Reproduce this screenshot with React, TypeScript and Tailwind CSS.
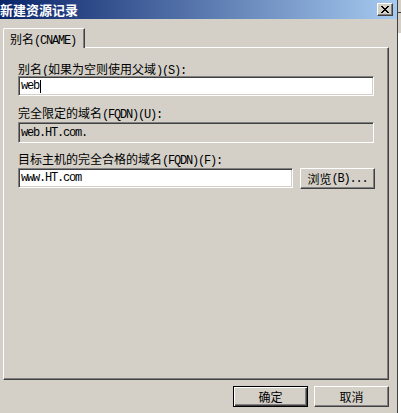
import React from "react";

function M({ t }: { t: string }) {
  const parts = t.split(/([\x20-\x7E]+)/).filter(Boolean);
  return (
    <>
      {parts.map((p, i) =>
        /^[\x20-\x7E]+$/.test(p) ? (
          <span key={i} className="font-['Liberation_Mono',monospace] tracking-[-1.2px]">
            {p}
          </span>
        ) : (
          <span key={i}>{p}</span>
        )
      )}
    </>
  );
}

const sunken =
  "border border-t-[#808080] border-l-[#808080] border-b-white border-r-white shadow-[inset_1px_1px_0_#404040,inset_-1px_-1px_0_#d4d0c8]";
const raised =
  "border border-t-white border-l-white border-b-[#404040] border-r-[#404040] shadow-[inset_-1px_-1px_0_#808080]";

export default function App() {
  return (
    <div className="w-[401px] h-[413px] flex overflow-hidden bg-[#d4d0c8] font-['Noto_Sans_CJK_SC',sans-serif] text-[12px] text-black">
      <div className="w-[398px] h-full flex flex-col border-r border-r-[#404040]">
        {/* title bar */}
        <div className="h-[19px] flex justify-between bg-[linear-gradient(to_right,#0a246a,#a6caf0)]">
          <div className="ml-0 text-white font-bold text-[13px] leading-[20px]">新建资源记录</div>
          <div className={`mt-[3px] mr-[4px] w-[16px] h-[13px] bg-[#d4d0c8] flex items-center justify-center ${raised}`}>
            <svg width="8" height="7" viewBox="0 0 8 7" shapeRendering="crispEdges">
              <path d="M0 0h2v1h-2zM6 0h2v1h-2zM1 1h2v1h-2zM5 1h2v1h-2zM2 2h4v1h-4zM3 3h2v1h-2zM2 4h4v1h-4zM1 5h2v1h-2zM5 5h2v1h-2zM0 6h2v1h-2zM6 6h2v1h-2z" fill="#000" />
            </svg>
          </div>
        </div>
        {/* body */}
        <div className="flex-1 flex flex-col px-[3px] pt-[9px]">
          <div className="flex">
            <div className="relative z-10 w-[82px] h-[20px] -mb-[1px] bg-[#d4d0c8] border-t border-l border-t-white border-l-white border-r border-r-[#404040] shadow-[inset_-1px_0_0_#808080] rounded-tl-[2px] pl-[6px] pt-[3px] leading-[14px]">
              <M t="别名(CNAME)" />
            </div>
          </div>
          <div className="w-[386px] h-[333px] border border-t-white border-l-white border-b-[#404040] border-r-[#404040] shadow-[inset_-1px_-1px_0_#808080] pl-[14px] pt-[14px] flex flex-col">
            <div className="h-[14px] leading-[14px]">
              <M t="别名(如果为空则使用父域)(S):" />
            </div>
            <div className={`w-[356px] h-[20px] bg-white ${sunken} pl-[2px] flex items-center leading-[14px]`}>
              <M t="web" />
              <span className="ml-[1px] w-[1px] h-[13px] bg-black" />
            </div>
            <div className="mt-[10px] h-[14px] leading-[14px]">
              <M t="完全限定的域名(FQDN)(U):" />
            </div>
            <div className={`mt-[2px] w-[356px] h-[21px] bg-[#d4d0c8] ${sunken} pl-[2px] flex items-center leading-[14px]`}>
              <M t="web.HT.com." />
            </div>
            <div className="mt-[9px] h-[14px] leading-[14px]">
              <M t="目标主机的完全合格的域名(FQDN)(F):" />
            </div>
            <div className="mt-[2px] flex gap-[7px]">
              <div className={`w-[275px] h-[20px] bg-white ${sunken} pl-[2px] flex items-center leading-[14px]`}>
                <M t="www.HT.com" />
              </div>
              <div className={`w-[75px] h-[21px] ${raised} flex items-center justify-center leading-[14px]`}>
                <M t="浏览(B)..." />
              </div>
            </div>
          </div>
          <div className="w-[386px] mt-[6px] flex justify-end gap-[6px]">
            <div className="w-[75px] h-[21px] border border-black shadow-[inset_1px_1px_0_#fff,inset_-1px_-1px_0_#404040,inset_-2px_-2px_0_#808080] flex items-center justify-center leading-[14px]">
              确定
            </div>
            <div className={`w-[75px] h-[21px] ${raised} flex items-center justify-center leading-[14px]`}>
              取消
            </div>
          </div>
        </div>
      </div>
      <div className="w-[3px] h-full flex flex-col">
        <div className="h-[12px] bg-[#d4d0c8]" />
        <div className="h-[1px] bg-[#404040]" />
        <div className="h-[20px] bg-[#d4d0c8]" />
        <div className="flex-1 bg-white" />
      </div>
    </div>
  );
}
